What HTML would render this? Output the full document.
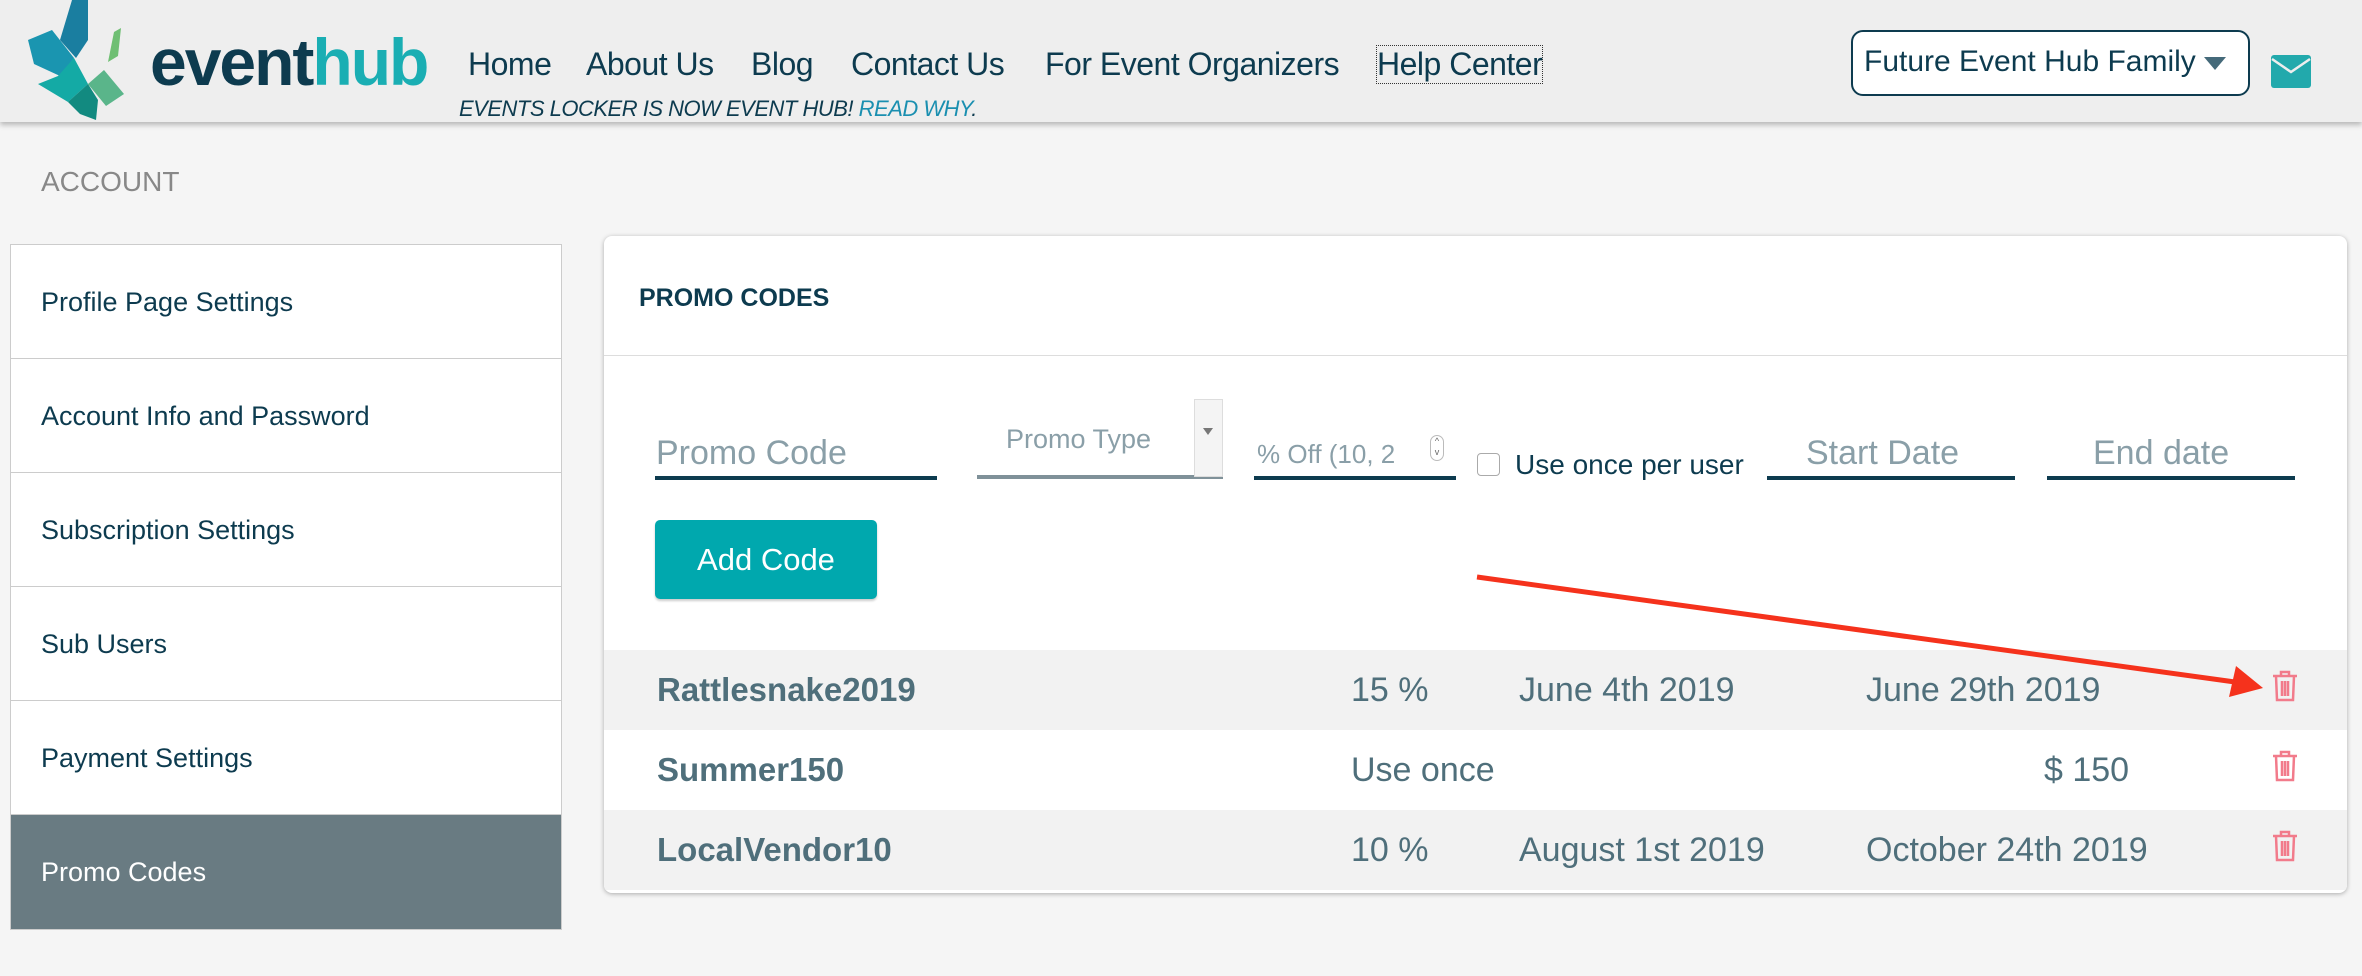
<!DOCTYPE html>
<html><head><meta charset="utf-8"><style>
*{box-sizing:border-box;margin:0;padding:0}
body{width:2362px;height:976px;background:#f5f5f5;font-family:"Liberation Sans",sans-serif;position:relative;overflow:hidden;color:#0d3b4f}
.hdr{position:absolute;left:0;top:0;width:2362px;height:122px;background:#eeeeee;box-shadow:0 3px 5px rgba(0,0,0,.25)}
.a{position:absolute;white-space:nowrap}
.nav{top:46px;font-size:32px;color:#0d3b4f;letter-spacing:-0.5px}
.side{position:absolute;left:10px;top:244px;width:552px;border:1px solid #ccc;background:#fff}
.side div{height:114px;border-bottom:1px solid #ccc;font-size:27px;padding-left:30px;line-height:114px;color:#0d3b4f}
.side div:last-child{border-bottom:none;background:#697b82;color:#fff}
.panel{position:absolute;left:604px;top:236px;width:1743px;height:657px;background:#fff;border-radius:8px;box-shadow:0 1px 5px rgba(0,0,0,.3);overflow:hidden}
.ph{color:#8a9fa8;font-size:34px}
.ul{position:absolute;height:4px;background:#0d3b4f}
.row{position:absolute;left:0;width:1743px;height:80px}
.row span{position:absolute;top:21px;font-size:34px;color:#4f6f7b}
.row b{position:absolute;top:21px;left:53px;font-size:33px;color:#4f6f7b}
.tr{position:absolute;left:1667px;top:20px}
</style></head><body>
<div class="hdr">
<svg class="a" style="left:24px;top:0" width="120" height="120" viewBox="0 0 120 120">
<polygon points="48,0 64,0 64,40 52,58 36,40" fill="#1a7ea0"/>
<polygon points="4,40 28,30 50,58 36,76 10,64" fill="#1a95b0"/>
<polygon points="90,32 97,28 94,56 84,62" fill="#6fbf73"/>
<polygon points="34,76 50,58 64,84 44,102 14,84" fill="#14aaa5"/>
<polygon points="64,84 80,70 100,94 82,106" fill="#5ab58a"/>
<polygon points="44,102 64,84 74,100 72,120 56,114" fill="#128a80"/>
</svg>
<div class="a" style="left:150px;top:24px;font-size:66px;font-weight:bold;letter-spacing:-2px"><span style="color:#0d3b4f">event</span><span style="color:#1aaeb3">hub</span></div>
<div class="a nav" style="left:468px">Home</div>
<div class="a nav" style="left:586px">About Us</div>
<div class="a nav" style="left:751px">Blog</div>
<div class="a nav" style="left:851px">Contact Us</div>
<div class="a nav" style="left:1045px">For Event Organizers</div>
<div class="a nav" style="left:1377px;outline:1px dotted #333">Help Center</div>
<div class="a" style="left:459px;top:96px;font-size:22px;font-style:italic;letter-spacing:-0.5px">EVENTS LOCKER IS NOW EVENT HUB! <span style="color:#1a8fb0">READ WHY</span>.</div>
<div class="a" style="left:1851px;top:30px;width:399px;height:66px;border:2px solid #0d3b4f;border-radius:12px;background:#fff;font-size:30px;padding:13px 0 0 11px">Future Event Hub Family
<svg style="position:absolute;right:22px;top:25px" width="22" height="14"><polygon points="0,0 22,0 11,13" fill="#456a7a"/></svg></div>
<svg class="a" style="left:2271px;top:55px" width="40" height="33" viewBox="0 0 40 33"><rect width="40" height="33" rx="3" fill="#22a9ac"/><polyline points="1,4 20,17 39,4" fill="none" stroke="#eee" stroke-width="2.5"/></svg>
</div>
<div class="a" style="left:41px;top:166px;font-size:28px;color:#888">ACCOUNT</div>
<div class="side"><div>Profile Page Settings</div><div>Account Info and Password</div><div>Subscription Settings</div><div>Sub Users</div><div>Payment Settings</div><div>Promo Codes</div></div>
<div class="panel">
<div class="a" style="left:35px;top:48px;font-size:25px;font-weight:bold;color:#0d3b4f">PROMO CODES</div>
<div class="a" style="left:0;top:119px;width:1743px;height:1px;background:#ddd"></div>
<div class="a ph" style="left:52px;top:198px">Promo Code</div><div class="ul" style="left:51px;top:240px;width:282px"></div>
<div class="a" style="left:373px;top:163px;width:246px;height:80px;border-bottom:4px solid #7f9199"></div>
<div class="a" style="left:402px;top:188px;font-size:27px;color:#8a9fa8">Promo Type</div>
<div class="a" style="left:590px;top:163px;width:29px;height:78px;background:#f4f4f4;border:1px solid #ddd"><svg style="position:absolute;left:8px;top:28px" width="10" height="7"><polygon points="0,0 10,0 5,7" fill="#777"/></svg></div>
<div class="a" style="left:653px;top:203px;font-size:26px;color:#8a9fa8">% Off (10, 2</div>
<div class="a" style="left:826px;top:199px;width:14px;height:26px;border:1px solid #bbb;border-radius:7px;font-size:9px;line-height:11px;text-align:center;color:#666">^<br>v</div>
<div class="ul" style="left:650px;top:240px;width:202px"></div>
<div class="a" style="left:873px;top:217px;width:23px;height:23px;border:1px solid #aaa;border-radius:4px"></div>
<div class="a" style="left:911px;top:213px;font-size:28px;color:#0d3b4f">Use once per user</div>
<div class="a ph" style="left:1202px;top:198px">Start Date</div><div class="ul" style="left:1163px;top:240px;width:248px"></div>
<div class="a ph" style="left:1489px;top:198px">End date</div><div class="ul" style="left:1443px;top:240px;width:248px"></div>
<div class="a" style="left:51px;top:284px;width:222px;height:79px;background:#00a8ae;border-radius:5px;color:#fff;font-size:31px;text-align:center;line-height:79px;box-shadow:0 2px 2px rgba(0,0,0,.2)">Add Code</div>
<div class="row" style="top:414px;background:#f2f2f2"><b>Rattlesnake2019</b><span style="left:747px">15 %</span><span style="left:915px">June 4th 2019</span><span style="left:1262px">June 29th 2019</span><svg class="tr" width="28" height="32" viewBox="0 0 28 32"><g fill="none" stroke="#f27b8b" stroke-width="2.5"><path d="M2,6H26M10,6V2H18V6M5,6L6,30H22L23,6M11,11V26M14,11V26M17,11V26"/></g></svg></div>
<div class="row" style="top:494px;background:#fff"><b>Summer150</b><span style="left:747px">Use once</span><span style="left:1440px">$ 150</span><svg class="tr" width="28" height="32" viewBox="0 0 28 32"><g fill="none" stroke="#f27b8b" stroke-width="2.5"><path d="M2,6H26M10,6V2H18V6M5,6L6,30H22L23,6M11,11V26M14,11V26M17,11V26"/></g></svg></div>
<div class="row" style="top:574px;background:#f2f2f2"><b>LocalVendor10</b><span style="left:747px">10 %</span><span style="left:915px">August 1st 2019</span><span style="left:1262px">October 24th 2019</span><svg class="tr" width="28" height="32" viewBox="0 0 28 32"><g fill="none" stroke="#f27b8b" stroke-width="2.5"><path d="M2,6H26M10,6V2H18V6M5,6L6,30H22L23,6M11,11V26M14,11V26M17,11V26"/></g></svg></div>
</div>
<svg class="a" style="left:0;top:0" width="2362" height="976"><line x1="1477" y1="577" x2="2235" y2="682" stroke="#f5321c" stroke-width="5"/><polygon points="2263,688 2229,697 2236,666" fill="#f5321c"/></svg>
</body></html>
